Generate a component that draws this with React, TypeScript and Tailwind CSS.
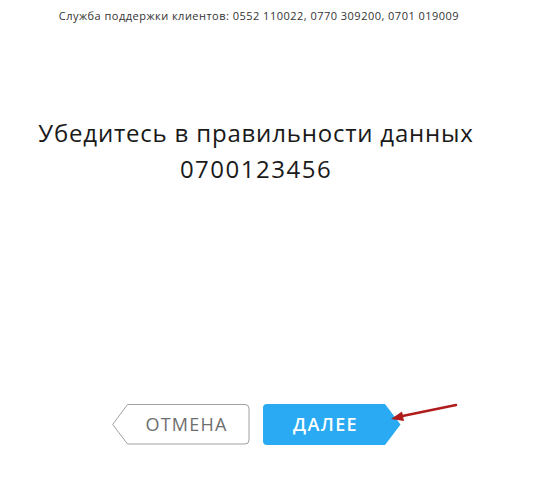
export default function App() {
  const font = { fontFamily: '"Open Sans", "Noto Sans", sans-serif' };

  return (
    <div className="relative w-[539px] h-[480px] bg-white overflow-hidden" style={font}>
      <div className="w-[512px] flex flex-col items-center">
        {/* Support line */}
        <p className="mt-[9px] ml-[6px] text-[11px] leading-[14px] text-[#333] tracking-[0.48px]">
          Служба поддержки клиентов: 0552 110022, 0770 309200, 0701 019009
        </p>

        {/* Confirm */}
        <div className="mt-[92px] text-center text-[24px] leading-[36px] text-[#1a1a1a]">
          <div className="tracking-[0.8px]">Убедитесь в правильности данных</div>
          <div className="tracking-[1.5px]">0700123456</div>
        </div>

        {/* Buttons */}
        <div className="mt-[217px] flex items-center gap-[13px]">
          <button className="relative w-[138px] h-[41px] flex items-center justify-center pl-[12px]">
            <svg className="absolute inset-0" width="138" height="41" viewBox="0 0 138 41" fill="none">
              <path
                d="M15.5 0.5 H133 a4 4 0 0 1 4 4 V36 a4 4 0 0 1 -4 4 H15.5 L0.7 20.5 Z"
                fill="white"
                stroke="#a0a0a0"
              />
            </svg>
            <span className="relative text-[18px] text-[#6e6e6e] tracking-[1.2px]">ОТМЕНА</span>
          </button>
          <button className="relative w-[138px] h-[41px] flex items-center justify-center pr-[12px]">
            <svg className="absolute inset-0" width="138" height="41" viewBox="0 0 138 41">
              <path d="M4 0 H122 L137.5 20.5 L122 41 H4 a4 4 0 0 1 -4 -4 V4 a4 4 0 0 1 4 -4 Z" fill="#2aaaf2" />
            </svg>
            <span className="relative text-[18px] font-semibold text-white tracking-[1.4px]">ДАЛЕЕ</span>
          </button>
        </div>
      </div>

      {/* Annotation arrow */}
      <svg className="absolute left-[386px] top-[400px]" width="76" height="24" viewBox="0 0 76 24">
        <line x1="70" y1="5" x2="14" y2="16.5" stroke="#b01c1c" strokeWidth="2.5" strokeLinecap="round" />
        <path d="M5 19 L16 11.5 L18 21 Z" fill="#b01c1c" />
      </svg>
    </div>
  );
}
